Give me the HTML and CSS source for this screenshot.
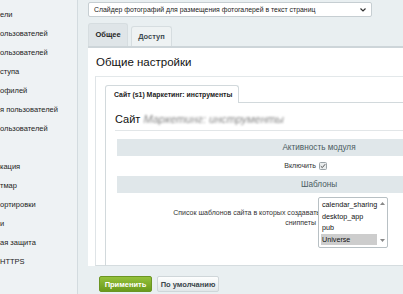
FILE: index.html
```html
<!DOCTYPE html>
<html lang="ru">
  <head>
    <meta charset="UTF-8" />
    <title>Настройки модуля</title>
    <link rel="stylesheet" href="styles.css">
  </head>
  <body>
    <div class="page">
      <ul class="side">
        <li>ели</li>
        <li>ользователей</li>
        <li>ользователей</li>
        <li>ступа</li>
        <li>офилей</li>
        <li>я пользователей</li>
        <li>ользователей</li>
        <li>&nbsp;</li>
        <li>кация</li>
        <li>тмар</li>
        <li>ортировки</li>
        <li>и</li>
        <li>ая защита</li>
        <li>HTTPS</li>
      </ul>

      <div class="main">
        <div class="select">
          <span>Слайдер фотографий для размещения фотогалерей в текст страниц</span>
          <svg width="6" height="4" viewBox="0 0 6 4"><path d="M0.5 0.5 L3 3 L5.5 0.5" fill="none" stroke="#333" stroke-width="1.2"/></svg>
        </div>

        <div class="tabs">
          <div class="tab active">Общее</div>
          <div class="tab">Доступ</div>
        </div>

        <div class="panel">
          <div class="title">Общие настройки</div>
          <div class="box">
            <div class="subtab">Сайт (s1) Маркетинг: инструменты</div>
            <div class="sub">
              <div class="site-title">Сайт <span class="blur">Маркетинг: инструменты</span></div>
              <div class="table">
                <div class="head">Активность модуля</div>
                <div class="row check-row">
                  <div class="label">Включить</div>
                  <div class="field">
                    <svg width="8" height="8" viewBox="0 0 8 8"><rect x="0.5" y="0.5" width="7" height="7" rx="1" fill="#e9eced" stroke="#9aa3a7"/><path d="M1.8 4.2 L3.3 5.6 L6.2 2.2" fill="none" stroke="#555" stroke-width="1"/></svg>
                  </div>
                </div>
                <div class="head">Шаблоны</div>
                <div class="row list-row">
                  <div class="label list-label"><span class="pull">Список шаблонов сайта в которых создавать</span><br>сниппеты</div>
                  <div class="field">
                    <div class="listbox">
                      <div class="items">
                        <div class="item">calendar_sharing</div>
                        <div class="item">desktop_app</div>
                        <div class="item">pub</div>
                        <div class="item selected">Universe</div>
                      </div>
                      <div class="scroll">
                        <svg width="5" height="3" viewBox="0 0 5 3"><path d="M0 3 L2.5 0 L5 3 Z" fill="#888"/></svg>
                        <svg width="5" height="3" viewBox="0 0 5 3"><path d="M0 0 L2.5 3 L5 0 Z" fill="#888"/></svg>
                      </div>
                    </div>
                  </div>
                </div>
              </div>
            </div>
          </div>
        </div>

        <div class="buttons">
          <div class="btn btn-green">Применить</div>
          <div class="btn">По умолчанию</div>
        </div>
      </div>
    </div>
  </body>
</html>
```

FILE: styles.css
```css
* {
  padding: 0;
  margin: 0;
  box-sizing: border-box;
}
body {
  width: 403px;
  height: 294px;
  overflow: hidden;
  font-family: "Liberation Sans", Arial, sans-serif;
  font-size: 7.5px;
  color: #222;
  background-color: #e9eff1;
}
li {
  list-style: none;
}
.page {
  display: flex;
  height: 294px;
}
/* левое меню */
.side {
  width: 78px;
  flex-shrink: 0;
  padding-top: 5px;
  line-height: 19px;
  white-space: nowrap;
  overflow: hidden;
  background-color: #eef2f4;
  border-right: 1px solid #d3dbdf;
}
.main {
  flex: 1;
  min-width: 0;
  padding: 2px 0 0 10px;
  overflow: hidden;
}
.select {
  display: flex;
  justify-content: space-between;
  align-items: center;
  width: 284px;
  height: 15px;
  padding: 0 5px 0 5px;
  font-size: 6.9px;
  white-space: nowrap;
  background-color: #fff;
  border: 1px solid #c6ced2;
  border-radius: 2px;
}
.tabs {
  display: flex;
  align-items: flex-end;
  gap: 3px;
  height: 23px;
  margin-top: 6px;
}
.tab {
  width: 41px;
  height: 20px;
  line-height: 19px;
  text-align: center;
  font-weight: bold;
  color: #3d4a50;
  background-color: #eef2f3;
  border: 1px solid #d6dde0;
  border-bottom: none;
  border-radius: 3px 3px 0 0;
}
.tab.active {
  width: 40px;
  height: 23px;
  line-height: 22px;
  color: #222;
  background-color: #dfe5e8;
}
.panel {
  width: 440px;
  background-color: #fff;
  border-top: 2px solid #cdd5d9;
}
.title {
  height: 28px;
  line-height: 28px;
  padding-left: 8px;
  font-size: 11.5px;
  color: #111;
}
.box {
  height: 190px;
  margin-left: 7px;
  padding: 8px 0 0 9px;
  border-left: 1px solid #dfe4e7;
  border-top: 1px solid #e3e8ea;
  border-bottom: 1px solid #d5dcdf;
}
.subtab {
  position: relative;
  display: inline-block;
  height: 18px;
  line-height: 18px;
  margin-bottom: -1px;
  padding: 0 6px 0 8px;
  font-size: 6.9px;
  font-weight: bold;
  white-space: nowrap;
  color: #222;
  background-color: #fff;
  border: 1px solid #d2d9dc;
  border-bottom: none;
  border-radius: 3px 3px 0 0;
}
.sub {
  height: 164px;
  padding-left: 9px;
  border-left: 1px solid #d2d9dc;
  border-top: 1px solid #d2d9dc;
}
.site-title {
  padding-top: 5px;
  line-height: 22px;
  font-size: 11px;
  white-space: nowrap;
  color: #111;
  border-bottom: 1px solid #e2e6e8;
}
.blur {
  color: #888;
  font-style: italic;
  filter: blur(0.9px);
}
.table {
  width: 404px;
  margin: 8px 0 0 2px;
}
.head {
  height: 17px;
  line-height: 17px;
  text-align: center;
  font-size: 8.2px;
  color: #4a5b61;
  background-color: #e0e7ea;
}
.row {
  display: grid;
  grid-template-columns: 1fr 1fr;
}
.check-row {
  height: 20px;
  align-items: center;
}
.label {
  text-align: right;
  padding-right: 3px;
  font-size: 7.1px;
  color: #333;
}
.field {
  display: flex;
  align-items: center;
}
.list-row {
  padding: 4px 0;
}
.list-label {
  padding-top: 11px;
  line-height: 10px;
  font-size: 7px;
  white-space: nowrap;
}
.pull {
  margin-right: -4px;
}
/* список шаблонов */
.listbox {
  position: relative;
  display: flex;
  width: 70px;
  height: 51px;
  margin-left: -1px;
  background-color: #fff;
  border: 1px solid #b8c0c4;
  border-radius: 2px;
}
.items {
  flex: 1;
  padding: 1px 0 0 2px;
}
.item {
  height: 11.5px;
  line-height: 11.5px;
  padding-left: 1px;
  font-size: 7.2px;
  white-space: nowrap;
  color: #111;
}
.item.selected {
  background-color: #cdcdcd;
}
.scroll {
  display: flex;
  flex-direction: column;
  justify-content: space-between;
  align-items: center;
  width: 10px;
  padding: 4px 0 5px;
}
.buttons {
  display: flex;
  gap: 5px;
  padding: 10px 0 0 11px;
}
.btn {
  width: 62px;
  height: 16px;
  line-height: 15px;
  text-align: center;
  font-weight: bold;
  color: #3a464b;
  background: linear-gradient(#fdfefe, #e1e7e9);
  border: 1px solid #cfd6d9;
  border-radius: 2px;
}
.btn-green {
  width: 53px;
  color: #fff;
  background: linear-gradient(#94c13a, #6a9a1c);
  border-color: #6b9522;
}
```
